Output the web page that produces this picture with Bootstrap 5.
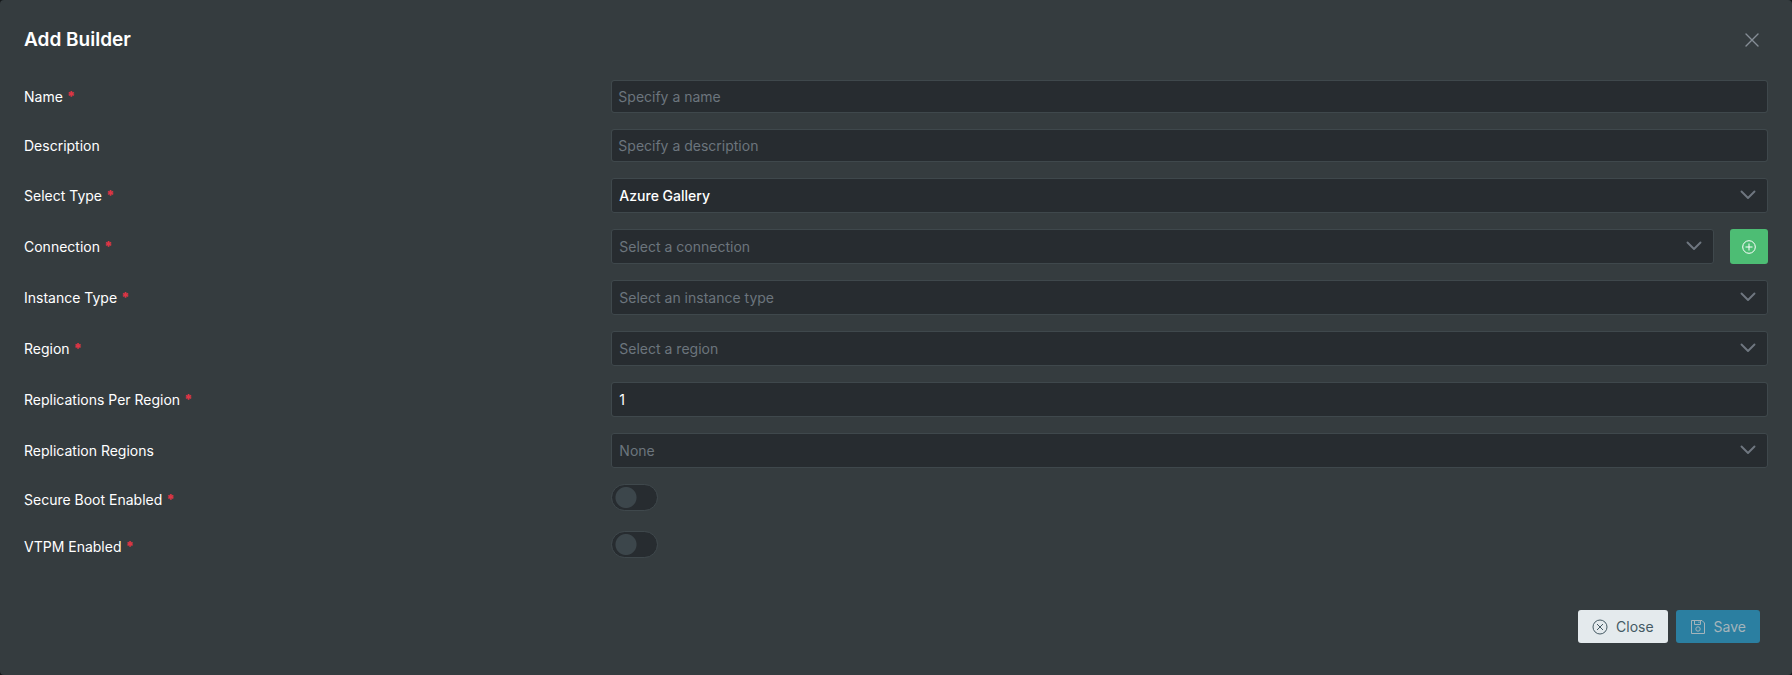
<!DOCTYPE html>
<html lang="en">
<head>
<meta charset="utf-8">
<meta name="viewport" content="width=device-width, initial-scale=1">
<title>Add Builder</title>
<link href="https://cdn.jsdelivr.net/npm/bootstrap@5.3.0/dist/css/bootstrap.min.css" rel="stylesheet">
<style>
  body { background: #15181a; color: #fff; font-family: Inter, sans-serif; font-size: 14px; line-height: 21px; }
  .builder-dialog { background: #353c3f; border-radius: 4px; padding: 24px; }
  .dialog-title { font-size: 19px; line-height: 32px; font-weight: 600; }
  .dismiss { width: 32px; height: 32px; color: #868e96; }
  .builder-form { --field-gap: 16px; gap: var(--field-gap); }
  .field-row { --bs-gutter-x: 18px; }
  .builder-form label { color: #fff; }
  .req { color: #dc3545; font-weight: 900; }
  .field { height: 35px; background-color: #272c30; border: 1px solid #3f484c; border-radius: 3px; color: #fff; font-size: 14px; line-height: 21px; padding: 6px 7px; }
  .field:focus { background-color: #272c30; color: #fff; border-color: #5a6268; box-shadow: none; }
  .field::placeholder { color: #6c757d; opacity: 1; }
  .field-text { height: 33px; padding: 5px 6px; }
  select.field { -webkit-appearance: none; appearance: none; background-image: none; padding-right: 40px; }
  select.chosen { font-weight: 500; }
  select.unset { color: #6c757d; }
  .chevron { right: 12px; top: 9px; color: #6f7780; pointer-events: none; }
  .add-btn { width: 38px; height: 35px; background: #4dbd74; color: #fff; border-radius: 3px; }
  .toggle-row { min-height: 31px; }
  .toggle { width: 47px !important; height: 27px !important; margin: 0 !important; float: none !important; display: block;
    background: radial-gradient(circle at 14px 50%, #3c464b 10px, #272c30 11px) !important; border: 1px solid #3f484c; border-radius: 14px !important; box-shadow: none !important; }
  .dialog-footer { padding: 48px 8px 8px; gap: 8px; }
  .action { height: 33px; padding: 0 14px; border: 0; border-radius: 3px; font-size: 14px; line-height: 21px; gap: 8px; }
  .action-close { background: #e4eaed; color: #455a64; }
  .action-save, .action-save:disabled { background: #2b7fa1; color: #a4b4bb; opacity: 1; }
</style>
</head>
<body>
<svg class="d-none" aria-hidden="true">
  <symbol id="chev" viewBox="0 0 16 16"><path d="M1.5 4.5 8 11l6.500-6.500" fill="none" stroke="currentColor" stroke-width="1.900" stroke-linecap="round" stroke-linejoin="round"/></symbol>
</svg>
<main class="builder-dialog">
  <header class="d-flex align-items-center justify-content-between mb-4">
    <h1 class="dialog-title m-0">Add Builder</h1>
    <button class="dismiss btn p-0 border-0 d-flex align-items-center justify-content-center" type="button" aria-label="Dismiss">
      <svg width="14" height="14" viewBox="0 0 14 14" fill="none" stroke="currentColor" stroke-width="1.400" stroke-linecap="round"><path d="m1 1 12 12M13 1 1 13"/></svg>
    </button>
  </header>
  <form>
    <div class="builder-form d-flex flex-column">
      <div class="field-row row align-items-center">
        <div class="col-4"><label for="name">Name <span class="req">*</span></label></div>
        <div class="col-8"><input id="name" class="form-control field field-text" type="text" placeholder="Specify a name"></div>
      </div>
      <div class="field-row row align-items-center">
        <div class="col-4"><label for="description">Description</label></div>
        <div class="col-8"><input id="description" class="form-control field field-text" type="text" placeholder="Specify a description"></div>
      </div>
      <div class="field-row row align-items-center">
        <div class="col-4"><label for="type">Select Type <span class="req">*</span></label></div>
        <div class="col-8"><div class="position-relative"><select id="type" class="form-select field chosen"><option>Azure Gallery</option></select><svg class="chevron position-absolute" width="16" height="16"><use href="#chev"/></svg></div></div>
      </div>
      <div class="field-row row align-items-center">
        <div class="col-4"><label for="connection">Connection <span class="req">*</span></label></div>
        <div class="col-8 d-flex gap-3">
          <div class="position-relative flex-grow-1"><select id="connection" class="form-select field unset"><option>Select a connection</option></select><svg class="chevron position-absolute" width="16" height="16"><use href="#chev"/></svg></div>
          <button class="add-btn btn p-0 border-0 d-flex align-items-center justify-content-center" type="button" aria-label="Add connection">
            <svg width="14" height="14" viewBox="0 0 14 14" fill="none" stroke="currentColor"><circle cx="7" cy="7" r="6.300"/><path d="M7 3.500v7M3.500 7h7"/></svg>
          </button>
        </div>
      </div>
      <div class="field-row row align-items-center">
        <div class="col-4"><label for="instance">Instance Type <span class="req">*</span></label></div>
        <div class="col-8"><div class="position-relative"><select id="instance" class="form-select field unset"><option>Select an instance type</option></select><svg class="chevron position-absolute" width="16" height="16"><use href="#chev"/></svg></div></div>
      </div>
      <div class="field-row row align-items-center">
        <div class="col-4"><label for="region">Region <span class="req">*</span></label></div>
        <div class="col-8"><div class="position-relative"><select id="region" class="form-select field unset"><option>Select a region</option></select><svg class="chevron position-absolute" width="16" height="16"><use href="#chev"/></svg></div></div>
      </div>
      <div class="field-row row align-items-center">
        <div class="col-4"><label for="replications">Replications Per Region <span class="req">*</span></label></div>
        <div class="col-8"><input id="replications" class="form-control field" type="text" inputmode="numeric" value="1"></div>
      </div>
      <div class="field-row row align-items-center">
        <div class="col-4"><label for="regions">Replication Regions</label></div>
        <div class="col-8"><div class="position-relative"><select id="regions" class="form-select field unset"><option>None</option></select><svg class="chevron position-absolute" width="16" height="16"><use href="#chev"/></svg></div></div>
      </div>
      <div class="field-row toggle-row row">
        <div class="col-4 d-flex align-items-center"><label for="secure">Secure Boot Enabled <span class="req">*</span></label></div>
        <div class="col-8"><div class="form-switch p-0"><input id="secure" class="form-check-input toggle" type="checkbox" role="switch"></div></div>
      </div>
      <div class="field-row toggle-row row">
        <div class="col-4 d-flex align-items-center"><label for="vtpm">VTPM Enabled <span class="req">*</span></label></div>
        <div class="col-8"><div class="form-switch p-0"><input id="vtpm" class="form-check-input toggle" type="checkbox" role="switch"></div></div>
      </div>
    </div>
    <footer class="dialog-footer d-flex justify-content-end">
      <button class="action action-close btn d-flex align-items-center" type="button">
        <svg width="16" height="16" viewBox="0 0 16 16" fill="none" stroke="currentColor"><circle cx="8" cy="8" r="7"/><path d="m5 5 6 6M11 5l-6 6"/></svg>Close
      </button>
      <button class="action action-save btn d-flex align-items-center" type="submit" disabled>
        <svg width="16" height="16" viewBox="0 0 16 16" fill="none" stroke="currentColor"><path d="M1.500 1.500h10.500l2.500 2.500v10.500h-13zM4.500 1.500v4h6v-4M9 2.500v1.500"/><circle cx="8" cy="10" r="2.200"/></svg>Save
      </button>
    </footer>
  </form>
</main>
<script src="https://cdn.jsdelivr.net/npm/bootstrap@5.3.0/dist/js/bootstrap.bundle.min.js"></script>
</body>
</html>
